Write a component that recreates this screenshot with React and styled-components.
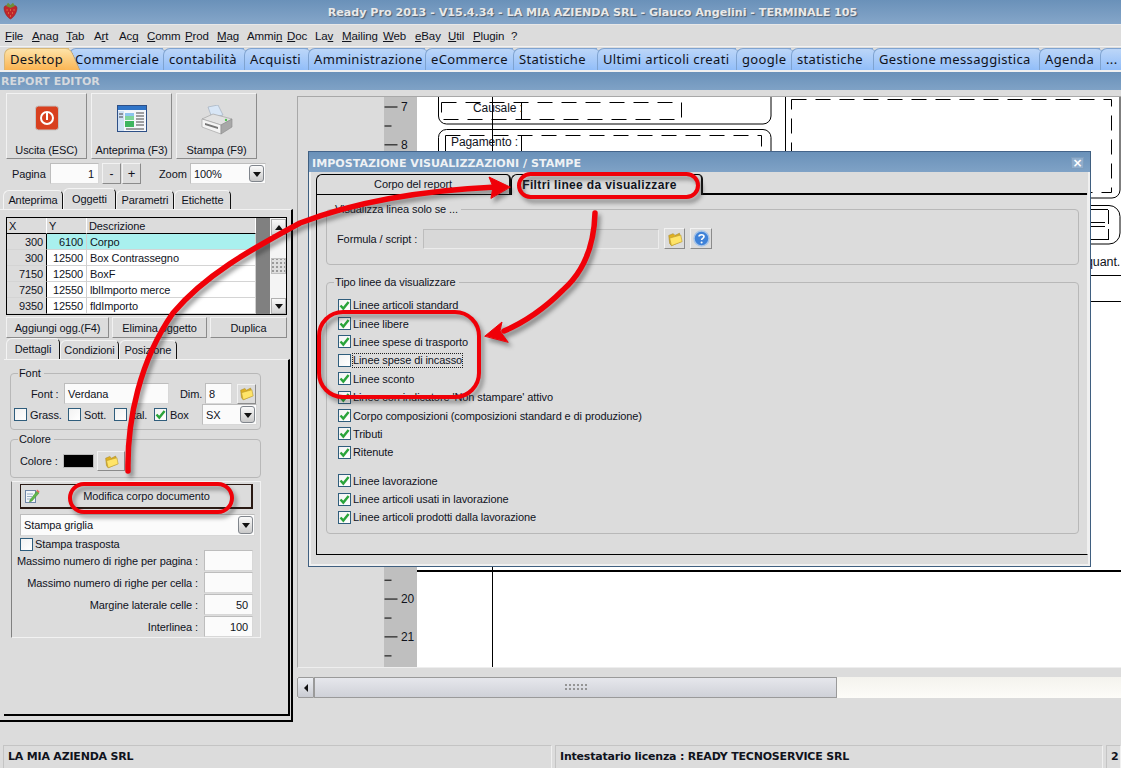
import React from 'react';
import styled, { createGlobalStyle } from 'styled-components';

const FONT = '"Liberation Sans", "Noto Sans", sans-serif';
const BG = '#dcdcdc';

const Global = createGlobalStyle`
	html, body { margin: 0; padding: 0; background: ${BG}; }
	body { font: 11px ${FONT}; letter-spacing: -0.1px; color: #10131c; }
	* { box-sizing: border-box; }
`;

const Page = styled.div`
	position: relative;
	width: 1121px;
	height: 768px;
	overflow: hidden;
	display: flex;
	flex-direction: column;
	background: ${BG};
`;

const TitleBar = styled.div`
	position: relative;
	height: 25px;
	flex: none;
	background: linear-gradient(#6a91b9, #85a6c9);
	border-bottom: 1px solid #e8e8e8;
	color: #e9e9e9;
	font: bold 11.1px "DejaVu Sans", sans-serif;
	letter-spacing: 0;
	text-shadow: 1px 1px 1px #4d5d70;
	display: flex;
	align-items: center;
	justify-content: center;
	padding: 1px 0 0 64px;
`;

const Logo = styled.svg`
	position: absolute;
	left: 3px;
	top: 2px;
`;

const MenuBar = styled.div`
	height: 21px;
	flex: none;
	display: flex;
	align-items: center;
	padding: 0 0 0 5px;
	font-size: 11.5px;
`;

const MenuItem = styled.span`
	width: ${p => p.$w}px;
	flex: none;
	white-space: nowrap;
	u { text-underline-offset: 1px; }
`;

const TabStrip = styled.div`
	height: 26px;
	flex: none;
	display: flex;
	padding: 1px 0 0 4px;
	border-top: 1px solid #f2f2f2;
	border-bottom: 2px solid #f0f0f0;
	overflow: hidden;
	font-family: "Noto Sans", sans-serif;
`;

const MainTab = styled.div`
	position: relative;
	width: ${p => p.$w}px;
	flex: none;
	height: 23px;
	padding: 1px 0 0 5px;
	font-size: 13px;
	letter-spacing: 0.35px;
	white-space: nowrap;
	border-radius: 7px 0 0 0;
	background: ${p => p.$on ? 'linear-gradient(#fde3a8, #fbb24e)' : 'linear-gradient(#bcd6f8, #8fbcf9)'};
	border-top: 1px solid ${p => p.$on ? '#d8b777' : '#7fa3d0'};
	border-left: 1px solid ${p => p.$on ? '#d8b777' : '#7fa3d0'};
	z-index: ${p => p.$on ? 2 : 1};
	&::after {
		content: '';
		position: absolute;
		top: -1px;
		right: -7px;
		width: 14px;
		height: 23px;
		background: inherit;
		border-top: 1px solid ${p => p.$on ? '#d8b777' : '#7fa3d0'};
		border-right: 1px solid ${p => p.$on ? '#c09a60' : '#6f94c4'};
		border-radius: 0 6px 0 0;
		transform: skewX(24deg);
		z-index: -1;
	}
`;

const SectionBar = styled.div`
	height: 18px;
	flex: none;
	padding-left: 1px;
	background: linear-gradient(#6a91b9, #7fa2c6);
	color: #d5d9de;
	font: bold 11px "DejaVu Sans", sans-serif;
	letter-spacing: 0;
	line-height: 20px;
`;

const Main = styled.div`
	flex: 1;
	display: flex;
	min-height: 0;
`;

const LeftPanel = styled.div`
	width: 293px;
	flex: none;
	display: flex;
	flex-direction: column;
`;

const ToolRow = styled.div`
	display: flex;
	gap: 4px;
	padding: 3px 0 0 6px;
`;

const ToolButton = styled.div`
	width: ${p => p.$w}px;
	height: 66px;
	display: flex;
	flex-direction: column;
	align-items: center;
	justify-content: space-between;
	padding: 11px 0 2px;
	background: ${BG};
	border: 1px solid #f2f2f2;
	border-right-color: #8b8b8b;
	border-bottom-color: #8b8b8b;
`;

const PagerRow = styled.div`
	height: 21px;
	margin-top: 4px;
	display: flex;
	align-items: center;
	padding-left: 12px;
`;

const Field = styled.div`
	width: ${p => p.$w}px;
	height: ${p => p.$h || 21}px;
	flex: none;
	margin-left: ${p => p.$ml || 0}px;
	margin-top: ${p => p.$mt || 0}px;
	background: ${p => p.$off ? '#d8d8d8' : '#fbfbfb'};
	border: 1px solid #bdbdbd;
	border-right-color: ${p => p.$off ? '#ececec' : '#d8d8d8'};
	border-bottom-color: ${p => p.$off ? '#ececec' : '#d8d8d8'};
	padding: 0 4px 0 3px;
	display: flex;
	align-items: center;
	justify-content: ${p => p.$right ? 'flex-end' : 'flex-start'};
	position: relative;
`;

const SmallButton = styled.div`
	width: ${p => p.$w}px;
	height: ${p => p.$h || 21}px;
	flex: none;
	margin-left: ${p => p.$ml || 0}px;
	display: flex;
	align-items: center;
	justify-content: center;
	background: ${BG};
	border: 1px solid #f2f2f2;
	border-right-color: #8b8b8b;
	border-bottom-color: #8b8b8b;
	font-size: ${p => p.$fs || 11}px;
`;

const Label = styled.span`
	flex: none;
	width: ${p => p.$w ? p.$w + 'px' : 'auto'};
	margin-left: ${p => p.$ml || 0}px;
	white-space: nowrap;
`;

const DropArrow = styled.span`
	position: absolute;
	right: 1px;
	top: 1px;
	bottom: 1px;
	width: 15px;
	border: 1px solid #80858c;
	border-radius: 3px;
	background: linear-gradient(#fafafa, #c9c9c9);
	&::after {
		content: '';
		position: absolute;
		left: 3px;
		top: 6px;
		border: 4px solid transparent;
		border-top: 5px solid #111;
		border-bottom: 0;
	}
`;

const TabRow = styled.div`
	height: ${p => p.$h}px;
	margin-top: ${p => p.$mt || 0}px;
	padding-left: ${p => p.$pl || 0}px;
	display: flex;
	align-items: flex-end;
	flex: none;
`;

const ClassicTab = styled.div`
	width: ${p => p.$w}px;
	height: ${p => p.$on ? '100%' : 'calc(100% - 2px)'};
	display: flex;
	align-items: center;
	justify-content: center;
	padding: 0 ${p => p.$bold ? 14 : 0}px 1px 0;
	font-size: ${p => p.$bold ? 12 : 11}px;
	font-weight: ${p => p.$bold ? 'bold' : 'normal'};
	letter-spacing: ${p => p.$bold ? 0.35 : -0.1}px;
	border-radius: 6px 5px 0 0;
	border-top: 1px solid ${p => p.$dark ? '#000' : '#f4f4f4'};
	border-left: 1px solid ${p => p.$dark ? '#000' : '#f4f4f4'};
	border-right: ${p => p.$dark ? 2 : 1}px solid #111;
	border-bottom: ${p => p.$open ? 'none' : p.$dark ? '1px solid #000' : 'none'};
`;

const TabPage = styled.div`
	height: 513px;
	border-top: 1px solid #f2f2f2;
	border-right: 2px solid #000;
	border-bottom: 2px solid #000;
	padding: 7px 4px 0 6px;
	display: flex;
	flex-direction: column;
`;

const Grid = styled.div`
	width: 281px;
	height: 98px;
	flex: none;
	border: 1px solid #000;
	display: grid;
	grid-template-columns: 40px 40px 169px 14px 1fr;
	grid-template-rows: repeat(6, 16px);
	background: #fff;
`;

const HeadCell = styled.div`
	background: ${BG};
	border-right: 1px solid #fff;
	border-bottom: 1px solid #000;
	padding-left: 2px;
	line-height: 16px;
`;

const Cell = styled.div`
	padding: 0 3px;
	line-height: 16px;
	text-align: ${p => p.$right ? 'right' : 'left'};
	white-space: nowrap;
	overflow: hidden;
	background: ${p => p.$fixed ? BG : p.$on ? '#a9f0ee' : '#fff'};
	border-right: 1px solid ${p => p.$fixed ? '#000' : '#d0d0d0'};
	border-bottom: 1px solid #d4d4d4;
`;

const GridGap = styled.div`
	grid-column: 4;
	grid-row: 1 / 7;
	background: #808080;
`;

const GridScroll = styled.div`
	grid-column: 5;
	grid-row: 1 / 7;
	background: #f4f4f4;
	display: flex;
	flex-direction: column;
	justify-content: space-between;
	position: relative;
	padding: 1px 0 0 1px;
`;

const ScrollButton = styled.div`
	height: 16px;
	background: linear-gradient(#f8f8f8, #d4d4d4);
	border: 1px solid #b0b0b0;
	display: flex;
	align-items: center;
	justify-content: center;
	&::after {
		content: '';
		border: 4px solid transparent;
		${p => p.$up ? 'border-bottom: 5px solid #111; border-top: 0;' : 'border-top: 5px solid #111; border-bottom: 0;'}
	}
`;

const ScrollThumb = styled.div`
	position: absolute;
	left: 1px;
	right: 0;
	top: 40px;
	height: 16px;
	background: radial-gradient(#9a9a9a 1px, transparent 1px) 3px 2px / 4px 4px, #dedede;
	border: 1px solid #c0c0c0;
`;

const ActionRow = styled.div`
	height: 21px;
	margin-top: 2px;
	flex: none;
	display: flex;
	gap: 3px;
`;

const SubPage = styled.div`
	width: 286px;
	height: 357px;
	margin-left: -2px;
	border-top: 1px solid #f2f2f2;
	border-right: 2px solid #000;
	border-bottom: 2px solid #000;
	padding: 6px 0 0 6px;
	display: flex;
	flex-direction: column;
	flex: none;
`;

const GroupBox = styled.div`
	position: relative;
	width: ${p => p.$w}px;
	height: ${p => p.$h}px;
	margin-top: ${p => p.$mt || 0}px;
	border: 1px solid #b8b8b8;
	border-radius: 4px;
	flex: none;
`;

const GroupTitle = styled.span`
	position: absolute;
	top: -8px;
	left: 7px;
	padding: 0 3px 0 1px;
	background: ${BG};
	line-height: 14px;
`;

const GroupRow = styled.div`
	display: flex;
	align-items: center;
	height: ${p => p.$h}px;
	padding-left: ${p => p.$pl || 0}px;
	margin-top: ${p => p.$mt || 0}px;
`;

const StyleOption = styled.span`
	width: ${p => p.$w}px;
	flex: none;
	display: flex;
	align-items: center;
`;

const Box = styled.span`
	width: 13px;
	height: 13px;
	flex: none;
	display: inline-flex;
	align-items: center;
	justify-content: center;
	margin-right: ${p => p.$mr}px;
	background: linear-gradient(135deg, #f2f2f2, #fff);
	border: 1px solid #2f5d7c;
`;

const ColorSwatch = styled.div`
	width: 31px;
	height: 14px;
	margin-left: 6px;
	background: #000;
	border: 1px solid #bbb;
	flex: none;
`;

const PrintPanel = styled.div`
	width: 250px;
	height: 157px;
	margin: 3px 0 0 1px;
	border-top: 1px solid #f2f2f2;
	border-left: 1px solid #808080;
	border-right: 1px solid #f2f2f2;
	border-bottom: 1px solid #f2f2f2;
	padding: 2px 0 0 8px;
	flex: none;
`;

const DocButton = styled.div`
	position: relative;
	width: 233px;
	height: 25px;
	border: 1px solid #2a1a14;
	border-right-width: 2px;
	border-bottom-width: 2px;
	display: flex;
	align-items: center;
	justify-content: center;
	padding-left: 21px;
	background: ${BG};
	svg { position: absolute; left: 4px; top: 3px; }
`;

const NumberRow = styled.div`
	width: 233px;
	height: 21px;
	margin-bottom: 1px;
	display: flex;
	align-items: center;
	justify-content: flex-end;
	gap: 6px;
	white-space: nowrap;
`;

const RightArea = styled.div`
	flex: 1;
	min-width: 0;
	padding: 6px 0 0 4px;
	display: flex;
	flex-direction: column;
`;

const CanvasFrame = styled.div`
	height: 572px;
	flex: none;
	border-top: 1px solid #a8a8a8;
	border-left: 1px solid #a8a8a8;
	border-bottom: 1px solid #eee;
	overflow: hidden;
	svg { display: block; }
`;

const HScroll = styled.div`
	height: 21px;
	margin-top: 9px;
	flex: none;
	display: flex;
	background: linear-gradient(#f4f3ee, #fdfcf8);
`;

const HArrow = styled.div`
	width: 17px;
	background: linear-gradient(#eceef2, #c9cbd2);
	border: 1px solid #9a9a9a;
	border-radius: 2px 0 0 2px;
	display: flex;
	align-items: center;
	justify-content: center;
	&::after {
		content: '';
		border: 4px solid transparent;
		border-right: 4px solid #111;
		border-left: 0;
	}
`;

const HThumb = styled.div`
	width: 523px;
	background: linear-gradient(#e6e7ec, #cfd1d8);
	border: 1px solid #9a9a9a;
	display: flex;
	align-items: center;
	justify-content: center;
	&::after {
		content: '';
		width: 24px;
		height: 9px;
		background: radial-gradient(#8f8f8f 0.7px, transparent 0.8px) 0 0 / 4px 4px;
	}
`;

const StatusBar = styled.div`
	height: 23px;
	flex: none;
	display: flex;
	gap: 3px;
	padding-left: 3px;
	font: bold 11px "DejaVu Sans", sans-serif;
	letter-spacing: -0.2px;
`;

const StatusCell = styled.div`
	width: ${p => p.$w}px;
	flex: ${p => p.$w ? 'none' : 1};
	padding: 4px 0 0 4px;
	white-space: nowrap;
	overflow: hidden;
	border-top: 1px solid #c4c4c4;
	border-left: 1px solid #c4c4c4;
	border-right: 1px solid #f0f0f0;
`;

const Dialog = styled.div`
	position: absolute;
	left: 308px;
	top: 151px;
	width: 783px;
	height: 416px;
	background: ${BG};
	border: 1px solid #3f5f80;
	border-top-color: #44648a;
	display: flex;
	flex-direction: column;
`;

const DialogTitle = styled.div`
	height: 20px;
	flex: none;
	display: flex;
	align-items: center;
	justify-content: space-between;
	padding: 2px 6px 0 3px;
	background: linear-gradient(#6a91b9, #7fa2c6);
	color: #eef1f4;
	font: bold 11.1px "DejaVu Sans", sans-serif;
	letter-spacing: 0;
`;

const CloseBox = styled.div`
	width: 13px;
	height: 12px;
	background: #8fadcc;
	color: #fff;
	border: 1px solid #7e9dbd;
	font: bold 12px/10px "DejaVu Sans", sans-serif;
	text-align: center;
`;

const DialogBody = styled.div`
	flex: 1;
	display: flex;
	flex-direction: column;
	padding: 2px 1px 0 5px;
	border: 2px solid #f0f0f0;
	border-top: none;
`;

const DialogPage = styled.div`
	width: 772px;
	height: 360px;
	flex: none;
	border-left: 1px solid #000;
	border-bottom: 1px solid #000;
	border-right: 1px solid #f0f0f0;
	padding: 14px 0 0 9px;
`;

const DialogTabLine = styled.div`
	flex: 1;
	height: 100%;
	border-bottom: 2px solid #000;
`;

const CheckList = styled.div`
	display: flex;
	flex-direction: column;
	padding: 13px 0 0 11px;
`;

const CheckRow = styled.div`
	height: 18.4px;
	margin-top: ${p => p.$mt || 0}px;
	display: flex;
	align-items: center;
	white-space: nowrap;
`;

const Focused = styled.span`
	outline: 1px dotted #222;
	line-height: 13px;
`;

const Annotations = styled.svg`
	position: absolute;
	left: 0;
	top: 0;
	pointer-events: none;
	g { filter: drop-shadow(3px 4px 2px rgba(40, 40, 40, 0.45)); }
`;

function Check({ on = true, mr = 2 }) {
	return (
		<Box $mr={mr}>
			{on && (
				<svg width="11" height="11" viewBox="0 0 11 11">
					<path d="M1.5 5.5 L4.3 8.6 L9.6 2" fill="none" stroke="#2aa43a" strokeWidth="2.4" />
				</svg>
			)}
		</Box>
	);
}

function Folder({ size = 18 }) {
	return (
		<svg width={size} height={size} viewBox="0 0 18 18">
			<path d="M2 5 L7 3 L9 5 L14 2.5 L15.5 12 L5 16.5 L3 14 Z" fill="#e0b020" stroke="#a88a2a" strokeWidth="0.7" />
			<path d="M3 8 L15.5 4.5 L17 12 L5 16.5 Z" fill="#ffe468" stroke="#b89a30" strokeWidth="0.7" />
		</svg>
	);
}

function HelpIcon() {
	return (
		<svg width="17" height="17" viewBox="0 0 17 17">
			<circle cx="8.5" cy="8.5" r="7.5" fill="#3f82d8" stroke="#a6c4e8" strokeWidth="1.5" />
			<path d="M6 6.5 C6 4.2 11 4.2 11 6.6 C11 8.4 8.6 8.2 8.6 10" fill="none" stroke="#fff" strokeWidth="1.6" />
			<circle cx="8.6" cy="12.4" r="1" fill="#fff" />
		</svg>
	);
}

function PowerIcon() {
	return (
		<svg width="24" height="26" viewBox="0 0 24 26">
			<rect x="0.5" y="1" width="23" height="24" rx="3" fill="#d8401f" stroke="#c4c4c4" />
			<circle cx="12" cy="13" r="6" fill="none" stroke="#fff" strokeWidth="2" />
			<rect x="11" y="8" width="2" height="7" fill="#fff" />
		</svg>
	);
}

function PreviewIcon() {
	return (
		<svg width="30" height="27" viewBox="0 0 30 27">
			<rect x="0.5" y="0.5" width="29" height="26" fill="#f4f6fa" stroke="#2d4f86" />
			<rect x="1" y="1" width="28" height="4" fill="#2f74c8" />
			<rect x="1" y="6" width="6" height="20" fill="#cfe0f4" />
			<rect x="8" y="8" width="9" height="7" fill="#7fd49a" />
			<rect x="8" y="8" width="9" height="3" fill="#8cc4ee" />
			<rect x="8" y="16" width="9" height="6" fill="#3fb560" />
			<path d="M19 8h8M19 11h8M19 14h8M19 17h8M19 20h8M9 24h18M2 9h4M2 12h4" stroke="#333" strokeWidth="0.9" />
		</svg>
	);
}

function PrinterIcon() {
	return (
		<svg width="32" height="30" viewBox="0 0 32 30">
			<path d="M7 2 L17 0 L22 10 L11 13 Z" fill="#d8e6f6" stroke="#9aa8b8" strokeWidth="0.6" />
			<path d="M1 14 L12 9 L31 14 L20 20 Z" fill="#e2e2e2" stroke="#9a9a9a" strokeWidth="0.6" />
			<path d="M1 14 L20 20 L20 29 L1 22 Z" fill="#f4f4f4" stroke="#9a9a9a" strokeWidth="0.6" />
			<path d="M20 20 L31 14 L31 22 L20 29 Z" fill="#a8a8a8" stroke="#8a8a8a" strokeWidth="0.6" />
			<path d="M4 18 L17 22 L17 24 L4 20 Z" fill="#777" />
			<circle cx="25" cy="15" r="1.2" fill="#4fc050" />
		</svg>
	);
}

function NoteIcon() {
	return (
		<svg width="15" height="16" viewBox="0 0 15 16">
			<rect x="0.5" y="2.5" width="10" height="12" fill="#f4f6fa" stroke="#6f86a8" />
			<path d="M2 6h6M2 8.5h5M2 11h4" stroke="#9ab0c8" />
			<path d="M5 12 L12 3 L14 5 L7 13 L4.5 14 Z" fill="#62b84a" stroke="#3f8a30" strokeWidth="0.5" />
			<path d="M12 1.5 L14.5 3.5 L14 5 L11.5 3 Z" fill="#e86a5a" />
		</svg>
	);
}

function Strawberry() {
	return (
		<Logo width="15" height="18" viewBox="0 0 15 18">
			<path d="M1 6 C1 3 5 3 7.5 4 C10 3 14 3 14 6 C14 11 10 16 7.5 17 C5 16 1 11 1 6 Z" fill="#c0262a" stroke="#8f1c20" strokeWidth="0.5" />
			<path d="M3 4 L5 0.8 L7.5 3 L10 0.8 L12 4 L7.5 6 Z" fill="#6d8f3a" />
			<path d="M4 8h.1M7.5 8h.1M11 8h.1M5.5 11h.1M9.5 11h.1M7.5 14h.1" stroke="#f0b060" strokeWidth="1" strokeLinecap="round" />
		</Logo>
	);
}

const MENU = [
	['File', 27, 0], ['Anag', 34, 0], ['Tab', 28, 0], ['Art', 25, 1], ['Acq', 28, 2], ['Comm', 38, 0],
	['Prod', 32, 0], ['Mag', 30, 0], ['Ammin', 40, 4], ['Doc', 28, 0], ['Lav', 27, 2], ['Mailing', 41, 0],
	['Web', 32, 0], ['eBay', 33, 0], ['Util', 25, 0], ['Plugin', 38, 0], ['?', 12, -1],
];

const MAIN_TABS = [
	['Desktop', 65], ['Commerciale', 94], ['contabilità', 81], ['Acquisti', 64], ['Amministrazione', 117], ['eCommerce', 88],
	['Statistiche', 84], ['Ultimi articoli creati', 139], ['google', 55], ['statistiche', 82], ['Gestione messaggistica', 166], ['Agenda', 61], ['...', 30],
];

const ROWS = [
	[300, 6100, 'Corpo', true],
	[300, 12500, 'Box Contrassegno'],
	[7150, 12500, 'BoxF'],
	[7250, 12550, 'lblImporto merce'],
	[9350, 12550, 'fldImporto'],
];

const CHECKS = [
	['Linee articoli standard', true],
	['Linee libere', true],
	['Linee spese di trasporto', true],
	['Linee spese di incasso', false],
	['Linee sconto', true],
	["Linee con indicatore 'Non stampare' attivo", true],
	['Corpo composizioni (composizioni standard e di produzione)', true],
	['Tributi', true],
	['Ritenute', true],
];

const WORK_CHECKS = ['Linee lavorazione', 'Linee articoli usati in lavorazione', 'Linee articoli prodotti dalla lavorazione'];

const NUMBER_ROWS = [
	['Massimo numero di righe per pagina :', ''],
	['Massimo numero di righe per cella :', ''],
	['Margine laterale celle :', '50'],
	['Interlinea :', '100'],
];

const STYLE_OPTIONS = [['Grass.', 54, false], ['Sott.', 46, false], ['Ital.', 40, false], ['Box', 48, true]];

function MenuLabel({ word, w, at }) {
	if (at < 0) return <MenuItem $w={w}>{word}</MenuItem>;
	return (
		<MenuItem $w={w}>
			{word.slice(0, at)}<u>{word[at]}</u>{word.slice(at + 1)}
		</MenuItem>
	);
}

function ReportCanvas() {
	const ticks = [];
	for (let n = 7; n <= 21; n++) {
		const y = 107 + (n - 7) * 37.85;
		ticks.push(
			<g key={n}>
				<path d={`M383.5 ${y}h13M383.5 ${y + 19}h7`} stroke="#000" />
				{(n < 9 || n > 19) && <text x="400" y={y + 4} fontSize="12">{n}</text>}
			</g>
		);
	}
	return (
		<svg width="824" height="570" viewBox="297 97 824 570" fontFamily={FONT} fill="#10131c">
			<rect x="383" y="97" width="33" height="571" fill="#bfbfbf" />
			<rect x="416" y="97" width="705" height="571" fill="#fff" />
			{ticks}
			<g fill="none" stroke="#000">
				<path d="M491.5 97V668" />
				<path d="M437.5 97V116a8 8 0 0 0 8 8H762a8 8 0 0 0 8-8V97" />
				<path d="M445.5 129.5H762a8 8 0 0 1 8 8V300M437.5 300V137.5a8 8 0 0 1 8-8" />
				<path d="M440.5 102.5H680.5V119.5H440.5Z" strokeDasharray="15 9" />
				<path d="M520.5 102V119M444.5 135.5V170M520.5 135V170" />
				<path d="M444.5 135.5H760.5V170" strokeDasharray="15 9" />
				<path d="M784.5 97V190a8 8 0 0 0 8 8H1111a8 8 0 0 0 8-8V97" />
				<path d="M790.5 99.5H1110.5V192.5H790.5Z" strokeDasharray="15 9" />
				<path d="M1060 205.5H1108a11 11 0 0 1 11 11V233a11 11 0 0 1-11 11H1060" />
				<path d="M1107.5 210V240" strokeDasharray="14 5" />
				<path d="M1060 209.5H1107M1060 222.5H1104M1060 226.5H1104M1060 239.5H1107" />
				<path d="M1060 275.5H1121M1060 301.5H1121" />
				<path d="M416 571H1121" strokeWidth="2" />
			</g>
			<text x="472" y="112" fontSize="12">Causale :</text>
			<text x="450" y="146" fontSize="12">Pagamento :</text>
			<text x="1085" y="266" fontSize="12.5">quant.</text>
		</svg>
	);
}

function RedMarks() {
	return (
		<Annotations width="1121" height="768" viewBox="0 0 1121 768">
			<g fill="none" stroke="#f00008" strokeLinecap="round">
				<path d="M128 471 C127 420 140 360 173 313 C205 275 250 250 300 223 C360 200 430 190 496 187" strokeWidth="5.5" />
				<path d="M510 187 L489 177 L493 187 L491 198 Z" fill="#f00008" stroke="#f00008" strokeWidth="1" strokeLinejoin="round" />
				<rect x="519" y="174" width="179" height="23" rx="11.5" strokeWidth="4" />
				<rect x="70" y="484" width="162" height="28" rx="14" strokeWidth="4" />
				<path d="M595 213 C594 250 580 275 563 290 C545 308 525 322 504 331" strokeWidth="5.5" />
				<path d="M485 336 L502 322 L500 331 L508 342 Z" fill="#f00008" stroke="#f00008" strokeWidth="1" strokeLinejoin="round" />
				<rect x="319" y="312" width="160" height="85" rx="24" strokeWidth="4" />
			</g>
		</Annotations>
	);
}

export default function App() {
	return (
		<Page>
			<Global />
			<TitleBar>
				<Strawberry />
				Ready Pro 2013 - V15.4.34 - LA MIA AZIENDA SRL - Glauco Angelini - TERMINALE 105
			</TitleBar>
			<MenuBar>
				{MENU.map(([word, w, at]) => <MenuLabel key={word} word={word} w={w} at={at} />)}
			</MenuBar>
			<TabStrip>
				{MAIN_TABS.map(([name, w], i) => (
					<MainTab key={name + i} $w={w} $on={i === 0}>{name}</MainTab>
				))}
			</TabStrip>
			<SectionBar>REPORT EDITOR</SectionBar>
			<Main>
				<LeftPanel>
					<ToolRow>
						<ToolButton $w={81}><PowerIcon />Uscita (ESC)</ToolButton>
						<ToolButton $w={81}><PreviewIcon />Anteprima (F3)</ToolButton>
						<ToolButton $w={81}><PrinterIcon />Stampa (F9)</ToolButton>
					</ToolRow>
					<PagerRow>
						<Label $w={33}>Pagina</Label>
						<Field $w={49} $ml={5} $right>1</Field>
						<SmallButton $w={19} $ml={3} $fs={12}>-</SmallButton>
						<SmallButton $w={19} $ml={1} $fs={13}>+</SmallButton>
						<Label $w={28} $ml={18}>Zoom</Label>
						<Field $w={76} $ml={3}>100%<DropArrow /></Field>
					</PagerRow>
					<TabRow $h={21} $mt={4} $pl={3}>
						<ClassicTab $w={60}>Anteprima</ClassicTab>
						<ClassicTab $w={53} $on>Oggetti</ClassicTab>
						<ClassicTab $w={58}>Parametri</ClassicTab>
						<ClassicTab $w={57}>Etichette</ClassicTab>
					</TabRow>
					<TabPage>
						<Grid>
							<HeadCell>X</HeadCell>
							<HeadCell>Y</HeadCell>
							<HeadCell>Descrizione</HeadCell>
							<GridGap />
							<GridScroll>
								<ScrollButton $up />
								<ScrollThumb />
								<ScrollButton />
							</GridScroll>
							{ROWS.map(([x, y, name, on]) => (
								<React.Fragment key={name}>
									<Cell $fixed $right>{x}</Cell>
									<Cell $right $on={on}>{y}</Cell>
									<Cell $on={on}>{name}</Cell>
								</React.Fragment>
							))}
						</Grid>
						<ActionRow>
							<SmallButton $w={103}>Aggiungi ogg.(F4)</SmallButton>
							<SmallButton $w={95}>Elimina oggetto</SmallButton>
							<SmallButton $w={77}>Duplica</SmallButton>
						</ActionRow>
						<TabRow $h={21}>
							<ClassicTab $w={54} $on>Dettagli</ClassicTab>
							<ClassicTab $w={59}>Condizioni</ClassicTab>
							<ClassicTab $w={58}>Posizione</ClassicTab>
						</TabRow>
						<SubPage>
							<GroupBox $w={251} $h={57} $mt={7}>
								<GroupTitle>Font</GroupTitle>
								<GroupRow $h={21} $pl={20} $mt={9}>
									<Label $w={29}>Font :</Label>
									<Field $w={105} $ml={4}>Verdana</Field>
									<Label $w={22} $ml={11}>Dim.</Label>
									<Field $w={27} $ml={3}>8</Field>
									<SmallButton $w={19} $h={20} $ml={5}><Folder size={15} /></SmallButton>
								</GroupRow>
								<GroupRow $h={21} $pl={3}>
									{STYLE_OPTIONS.map(([label, w, on]) => (
										<StyleOption key={label} $w={w}><Check on={on} mr={3} />{label}</StyleOption>
									))}
									<Field $w={55}>SX<DropArrow /></Field>
								</GroupRow>
							</GroupBox>
							<GroupBox $w={251} $h={39} $mt={9}>
								<GroupTitle>Colore</GroupTitle>
								<GroupRow $h={20} $pl={9} $mt={11}>
									<Label $w={37}>Colore :</Label>
									<ColorSwatch />
									<SmallButton $w={28} $h={20} $ml={3}><Folder size={15} /></SmallButton>
								</GroupRow>
							</GroupBox>
							<PrintPanel>
								<DocButton><NoteIcon />Modifica corpo documento</DocButton>
								<Field $w={235} $h={22} $mt={5}>Stampa griglia<DropArrow /></Field>
								<GroupRow $h={12} $mt={2}>
									<Check on={false} />Stampa trasposta
								</GroupRow>
								{NUMBER_ROWS.map(([label, value]) => (
									<NumberRow key={label}>
										{label}
										<Field $w={49} $right>{value}</Field>
									</NumberRow>
								))}
							</PrintPanel>
						</SubPage>
					</TabPage>
				</LeftPanel>
				<RightArea>
					<CanvasFrame><ReportCanvas /></CanvasFrame>
					<HScroll>
						<HArrow />
						<HThumb />
					</HScroll>
				</RightArea>
			</Main>
			<StatusBar>
				<StatusCell $w={549}>LA MIA AZIENDA SRL</StatusCell>
				<StatusCell $w={548}>Intestatario licenza : READY TECNOSERVICE SRL</StatusCell>
				<StatusCell>2</StatusCell>
			</StatusBar>
			<Dialog>
				<DialogTitle>
					IMPOSTAZIONE VISUALIZZAZIONI / STAMPE
					<CloseBox>×</CloseBox>
				</DialogTitle>
				<DialogBody>
					<TabRow $h={21}>
						<ClassicTab $w={195} $dark $on>Corpo del report</ClassicTab>
						<ClassicTab $w={192} $dark $on $open $bold>Filtri linee da visualizzare</ClassicTab>
						<DialogTabLine />
					</TabRow>
					<DialogPage>
						<GroupBox $w={753} $h={56}>
							<GroupTitle>Visualizza linea solo se ...</GroupTitle>
							<GroupRow $h={21} $pl={10} $mt={18}>
								<Label $w={83}>Formula / script :</Label>
								<Field $w={236} $h={20} $ml={3} $off />
								<SmallButton $w={21} $h={21} $ml={5}><Folder size={16} /></SmallButton>
								<SmallButton $w={22} $h={21} $ml={5}><HelpIcon /></SmallButton>
							</GroupRow>
						</GroupBox>
						<GroupBox $w={753} $h={252} $mt={17}>
							<GroupTitle>Tipo linee da visualizzare</GroupTitle>
							<CheckList>
								{CHECKS.map(([label, on]) => (
									<CheckRow key={label}>
										<Check on={on} />
										{on ? label : <Focused>{label}</Focused>}
									</CheckRow>
								))}
								{WORK_CHECKS.map((label, i) => (
									<CheckRow key={label} $mt={i === 0 ? 10 : 0}>
										<Check />{label}
									</CheckRow>
								))}
							</CheckList>
						</GroupBox>
					</DialogPage>
				</DialogBody>
			</Dialog>
			<RedMarks />
		</Page>
	);
}
